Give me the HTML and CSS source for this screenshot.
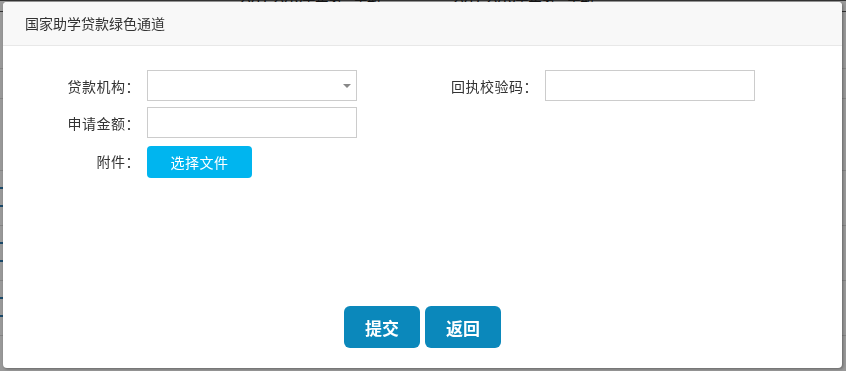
FILE: index.html
```html
<!DOCTYPE html>
<html lang="zh-CN">
<head>
<meta charset="utf-8">
<title>国家助学贷款绿色通道</title>
<link rel="stylesheet" href="styles.css">
</head>
<body>
<div class="page">
  <div class="page-top">
    <span class="bg-text">2017-2018学年第一学期</span>
    <span class="bg-text second">2017-2018学年第二学期</span>
  </div>
  <div class="bg-rows">
    <div class="bg-row head"></div>
    <div class="bg-row mid"></div>
    <div class="bg-row tall"></div>
    <div class="bg-row links"></div>
    <div class="bg-row links"></div>
    <div class="bg-row links"></div>
  </div>
</div>
<div class="overlay"></div>
<div class="modal">
  <div class="modal-header">国家助学贷款绿色通道</div>
  <div class="modal-body">
    <div class="form-grid">
      <label class="label">贷款机构：</label>
      <div class="select">
        <span class="caret"></span>
      </div>
      <label class="label">回执校验码：</label>
      <input class="input" type="text">

      <label class="label">申请金额：</label>
      <input class="input" type="text">
      <span></span>
      <span></span>

      <label class="label">附件：</label>
      <div><button class="file-btn" type="button">选择文件</button></div>
    </div>
  </div>
  <div class="modal-footer">
    <button class="btn" type="button">提交</button>
    <button class="btn" type="button">返回</button>
  </div>
</div>
</body>
</html>
```
FILE: styles.css
```css
* {
  box-sizing: border-box;
}

html, body {
  margin: 0;
  padding: 0;
  height: 100%;
}

body {
  font-family: "Noto Sans CJK SC", "Noto Sans", sans-serif;
  background: #ffffff;
  overflow: hidden;
  color: #333;
}

.page {
  height: 100%;
}

.page-top {
  height: 0;
  padding-left: 240px;
  font-size: 13px;
  line-height: 1;
  margin-top: -9px;
  white-space: nowrap;
}

.bg-text {
  color: #222;
}

.bg-text.second {
  margin-left: 70px;
}

.bg-rows {
  padding-top: 9px;
}

.bg-row {
  height: 55px;
  border-bottom: 1px solid #ddd;
}

.bg-row.head {
  height: 69px;
  border-top: 1px solid #555;
  background: linear-gradient(#555, #555) 0 10px / 100% 1px no-repeat;
}

.bg-row.mid {
  height: 30px;
}

.bg-row.tall {
  height: 72px;
}

.bg-row.links {
  background:
    linear-gradient(#2a7ab0, #2a7ab0) 0 16px / 8px 2px no-repeat,
    linear-gradient(#2a7ab0, #2a7ab0) 0 34px / 8px 2px no-repeat;
}

.overlay {
  position: fixed;
  inset: 0;
  background: rgba(0, 0, 0, 0.4);
}

.modal {
  position: fixed;
  left: 3px;
  top: 2px;
  width: 839px;
  height: 366px;
  background: #fff;
  border-radius: 4px;
  box-shadow: 1px 1px 3px rgba(0, 0, 0, 0.35);
  display: flex;
  flex-direction: column;
  overflow: hidden;
}

.modal-header {
  height: 44px;
  background: #f8f8f8;
  border-bottom: 1px solid #e8e8e8;
  padding-left: 22px;
  font-size: 14px;
  line-height: 43px;
  color: #333;
}

.modal-body {
  flex: 1;
  padding-top: 24px;
}

.form-grid {
  display: grid;
  grid-template-columns: 144px 210px 188px 210px;
  grid-auto-rows: auto;
  row-gap: 6px;
  align-items: center;
}

.label {
  text-align: right;
  padding-right: 7px;
  font-size: 14px;
  letter-spacing: 0.5px;
  color: #333;
}

.select,
.input {
  height: 31px;
  width: 210px;
  border: 1px solid #ccc;
  background: #fff;
  margin: 0;
  padding: 0 8px;
  font: inherit;
}

.select {
  position: relative;
}

.caret {
  position: absolute;
  right: 5px;
  top: 13px;
  width: 0;
  height: 0;
  border-left: 4px solid transparent;
  border-right: 4px solid transparent;
  border-top: 4px solid #888;
}

.file-btn {
  margin-top: 2px;
  width: 105px;
  height: 32px;
  border: none;
  border-radius: 4px;
  background: #00b5ef;
  color: #fff;
  font-family: inherit;
  font-size: 14px;
  letter-spacing: 0.5px;
  padding: 0;
}

.modal-footer {
  display: flex;
  justify-content: center;
  gap: 5px;
  padding-bottom: 20px;
}

.btn {
  width: 76px;
  height: 42px;
  border: none;
  border-radius: 6px;
  background: #0b88bb;
  color: #fff;
  font-family: inherit;
  font-weight: bold;
  font-size: 17px;
  padding: 0;
}
```
